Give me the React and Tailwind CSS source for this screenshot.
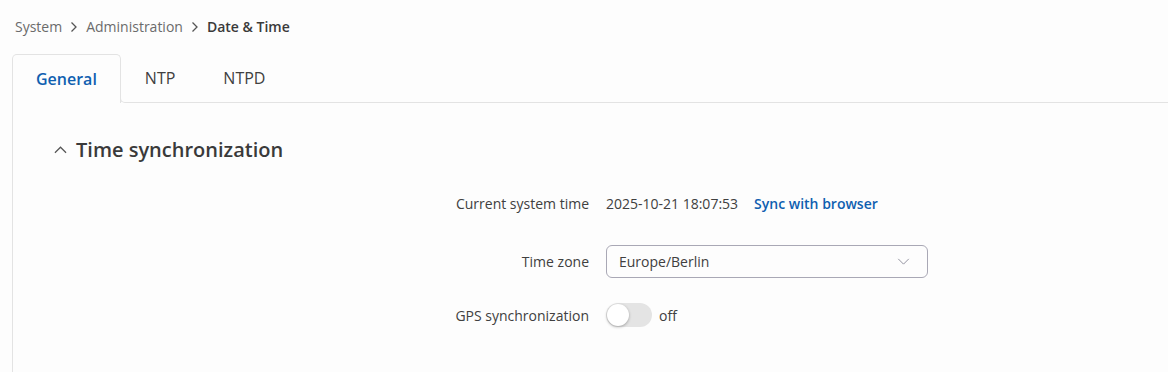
import React, { useState } from "react";

const rows = "flex items-center";

function Chevron({ className }) {
  return (
    <svg viewBox="0 0 8 12" className={className} fill="none" stroke="currentColor" strokeWidth="1.3">
      <path d="M1.5 1.5 L6 6 L1.5 10.5" />
    </svg>
  );
}

function Konten() {
  const [gps, setGps] = useState(false);

  return (
    <div className="min-h-[372px] bg-[#fdfdfd] font-['Open_Sans',sans-serif] text-[#404040]">
      <div className="flex h-[54px] items-center pl-[15px] pb-[1px] text-[14px]">
        <span className="text-[#6b6b6b]">System</span>
        <Chevron className="mx-[8px] h-[12px] w-[8px] text-[#555]" />
        <span className="text-[#6b6b6b]">Administration</span>
        <Chevron className="mx-[8px] h-[12px] w-[8px] text-[#555]" />
        <span className="font-semibold text-[#3a3a3a]">Date &amp; Time</span>
      </div>

      <div className="flex pl-3">
        <div className="flex h-[49px] items-center rounded-t-[5px] border border-b-0 border-[#e3e3e3] bg-[#fdfdfd] px-[23px] text-[16px] font-semibold text-[#0f5fb0]">
          General
        </div>
        <div className="flex flex-1 flex-col">
          <div className="flex h-[44px] items-center">
            <div className="px-6 pt-[4px] text-[16px] text-[#404040]">NTP</div>
            <div className="px-6 pt-[4px] text-[16px] text-[#404040]">NTPD</div>
          </div>
          <div className="-ml-[1px] h-[5px] rounded-bl-[5px] border-b border-l border-[#e3e3e3]"></div>
        </div>
      </div>

      <div className="ml-3 border-l border-[#e3e3e3] pl-10 pb-[44px]">
        <div className={`${rows} h-[88px] pt-[6px]`}>
          <svg viewBox="0 0 14 8" className="ml-[1px] h-[8px] w-[13px] text-[#555]" fill="none" stroke="currentColor" strokeWidth="1.3">
            <path d="M1 7 L7 1 L13 7" />
          </svg>
          <span className="ml-[9px] text-[20px] font-semibold text-[#3a3a3a]">Time synchronization</span>
        </div>

        <div className={`${rows} h-[24px] text-[14px]`}>
          <div className="w-[536px] text-right">Current system time</div>
          <div className="ml-[17px]">2025-10-21 18:07:53</div>
          <button className="ml-4 font-semibold text-[#0f5fb0]">Sync with browser</button>
        </div>

        <div className={`${rows} mt-[30px] text-[14px]`}>
          <div className="w-[536px] text-right">Time zone</div>
          <div className="ml-[17px] flex h-[33px] w-[322px] items-center justify-between rounded-[6px] border border-[#a9a8b5] pl-[12px] pr-[17px]">
            <span>Europe/Berlin</span>
            <svg viewBox="0 0 14 8" className="h-[7px] w-[13px] text-[#8f8e9c]" fill="none" stroke="currentColor" strokeWidth="1.1">
              <path d="M1 1 L7 7 L13 1" />
            </svg>
          </div>
        </div>

        <div className={`${rows} mt-[24px] h-[26px] text-[14px]`}>
          <div className="w-[536px] text-right">GPS synchronization</div>
          <button
            onClick={() => setGps(!gps)}
            className={`ml-[17px] flex h-[24px] w-[46px] items-center rounded-full px-[1px] ${gps ? "bg-[#0f5fb0] justify-end" : "bg-[#e4e4e4]"}`}
          >
            <span className="h-[22px] w-[22px] rounded-full bg-white shadow-[0_1px_3px_rgba(0,0,0,0.3)]"></span>
          </button>
          <span className="ml-[7px]">{gps ? "on" : "off"}</span>
        </div>
      </div>
    </div>
  );
}

export default function App() {
  return <Konten />;
}
